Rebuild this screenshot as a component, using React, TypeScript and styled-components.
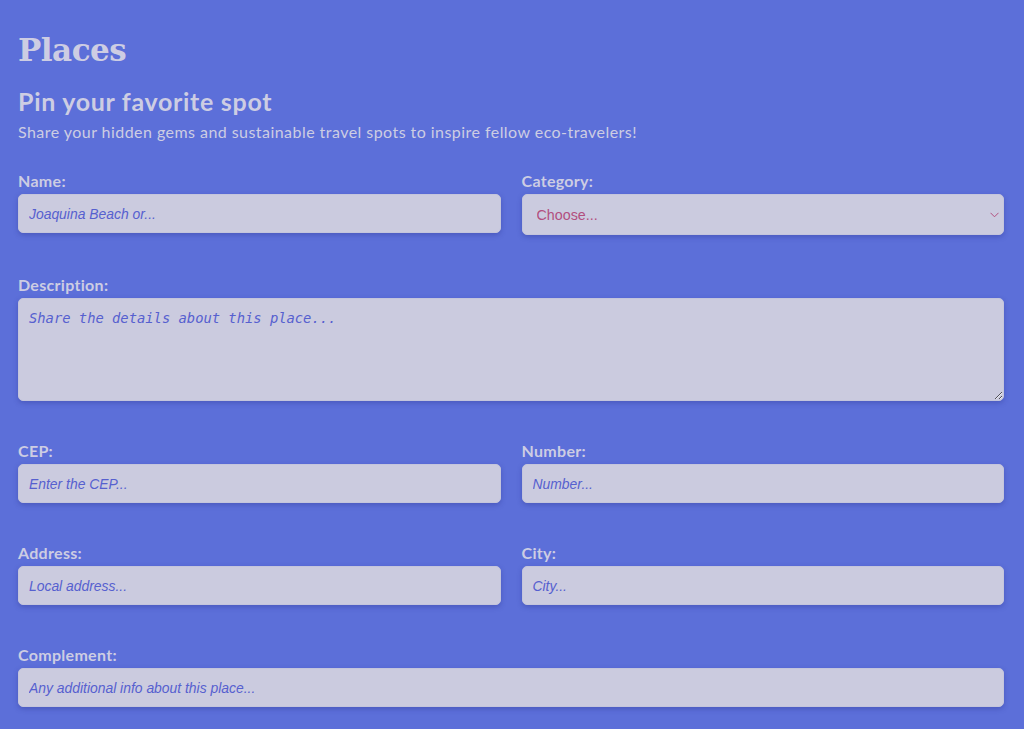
import React from "react";
import styled, { createGlobalStyle } from "styled-components";

const Global = createGlobalStyle`
  html, body { margin: 0; padding: 0; background: #5c6fd9; }
  body { font-family: "Lato", "Open Sans", sans-serif; }
  * { box-sizing: border-box; }
`;

const Page = styled.main`
  min-height: 729px;
  padding: 28px 20px 0 18px;
  color: #cfd0e6;
`;

const Title = styled.h1`
  margin: 0;
  font-family: "DejaVu Serif", "Liberation Serif", serif;
  font-weight: 700;
  font-size: 31px;
  line-height: 44px;
  letter-spacing: -0.5px;
  color: #cdcde3;
`;

const Heading = styled.h2`
  margin: 14px 0 0;
  font-family: "Lato", sans-serif;
  font-weight: 700;
  font-size: 25px;
  line-height: 30px;
  letter-spacing: 0.7px;
  color: #cdcde3;
`;

const Lead = styled.p`
  margin: 6px 0 0;
  font-family: "Lato", sans-serif;
  font-size: 16px;
  line-height: 20px;
  letter-spacing: 0.45px;
  color: #cdcde3;
`;

const Form = styled.form`
  margin-top: 28px;
  display: grid;
  grid-template-columns: 1fr 1fr;
  column-gap: 21px;
  row-gap: 39px;
  width: 986px;
`;

const Field = styled.div<{ $full?: boolean }>`
  display: flex;
  flex-direction: column;
  grid-column: ${(p) => (p.$full ? "1 / -1" : "auto")};
`;

const Label = styled.label`
  font-family: "Lato", sans-serif;
  font-weight: 700;
  font-size: 16px;
  line-height: 21px;
  letter-spacing: 0.3px;
  margin-bottom: 3px;
  color: #cdcde3;
`;

const fieldBase = `
  width: 100%;
  border: 1px solid #c4c5dc;
  border-radius: 5px;
  background: #cbcbdf;
  box-shadow: 0 2px 5px rgba(40, 50, 140, 0.35);
  outline: none;
`;

const Input = styled.input`
  ${fieldBase}
  height: 39px;
  padding: 0 10px;
  font-family: "Liberation Sans", Arial, sans-serif;
  font-size: 13.9px;
  color: #4b55c8;
  &::placeholder { color: #5660cf; font-style: italic; }
`;

const SelectWrap = styled.div`
  position: relative;
`;

const Select = styled.select`
  ${fieldBase}
  appearance: none;
  height: 41px;
  padding: 0 14px;
  font-family: "Liberation Sans", Arial, sans-serif;
  font-size: 14.3px;
  color: #b24f7e;
`;

const Chevron = styled.svg`
  position: absolute;
  right: 5px;
  top: 18px;
  width: 9px;
  height: 6px;
  pointer-events: none;
`;

const TextArea = styled.textarea`
  ${fieldBase}
  height: 103px;
  padding: 11px 10px;
  resize: vertical;
  font-family: "DejaVu Sans Mono", monospace;
  font-size: 13.8px;
  color: #4b55c8;
  &::placeholder { color: #5660cf; font-style: italic; }
`;

export default function App() {
  return (
    <>
      <Global />
      <Page>
        <Title>Places</Title>
        <Heading>Pin your favorite spot</Heading>
        <Lead>Share your hidden gems and sustainable travel spots to inspire fellow eco-travelers!</Lead>
        <Form onSubmit={(e) => e.preventDefault()}>
          <Field>
            <Label htmlFor="name">Name:</Label>
            <Input id="name" placeholder="Joaquina Beach or..." />
          </Field>
          <Field>
            <Label htmlFor="category">Category:</Label>
            <SelectWrap>
              <Select id="category" defaultValue="">
                <option value="">Choose...</option>
                <option value="beach">Beach</option>
                <option value="park">Park</option>
                <option value="trail">Trail</option>
              </Select>
              <Chevron viewBox="0 0 9 6">
                <path d="M0.5 0.8 L4.5 4.8 L8.5 0.8" fill="none" stroke="#b24f7e" strokeWidth="1" />
              </Chevron>
            </SelectWrap>
          </Field>
          <Field $full>
            <Label htmlFor="description">Description:</Label>
            <TextArea id="description" placeholder="Share the details about this place..." />
          </Field>
          <Field>
            <Label htmlFor="cep">CEP:</Label>
            <Input id="cep" placeholder="Enter the CEP..." />
          </Field>
          <Field>
            <Label htmlFor="number">Number:</Label>
            <Input id="number" placeholder="Number..." />
          </Field>
          <Field>
            <Label htmlFor="address">Address:</Label>
            <Input id="address" placeholder="Local address..." />
          </Field>
          <Field>
            <Label htmlFor="city">City:</Label>
            <Input id="city" placeholder="City..." />
          </Field>
          <Field $full>
            <Label htmlFor="complement">Complement:</Label>
            <Input id="complement" placeholder="Any additional info about this place..." />
          </Field>
        </Form>
      </Page>
    </>
  );
}
